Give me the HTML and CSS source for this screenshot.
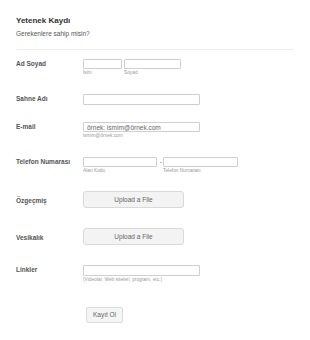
FILE: index.html
```html
<!DOCTYPE html>
<html lang="tr">
<head>
<meta charset="utf-8">
<link rel="stylesheet" href="styles.css">
</head>
<body>
<form class="form">
  <header class="head">
    <h1 class="title">Yetenek Kaydı</h1>
    <p class="subtitle">Gerekenlere sahip misin?</p>
  </header>

  <div class="row row-tall">
    <label class="label">Ad Soyad</label>
    <div class="field pair">
      <span class="sub"><input class="input w-first" type="text"><small class="hint">İsim</small></span>
      <span class="sub"><input class="input w-last" type="text"><small class="hint">Soyad</small></span>
    </div>
  </div>

  <div class="row row-single">
    <label class="label">Sahne Adı</label>
    <div class="field"><input class="input w-wide tall" type="text"></div>
  </div>

  <div class="row row-tall">
    <label class="label">E-mail</label>
    <div class="field">
      <input class="input w-wide" type="text" placeholder="örnek: ismim@örnek.com">
      <small class="hint">ismim@örnek.com</small>
    </div>
  </div>

  <div class="row row-phone">
    <label class="label">Telefon Numarası</label>
    <div class="field pair">
      <span class="sub"><input class="input w-area" type="text"><small class="hint">Alan Kodu</small></span>
      <span class="dash">-</span>
      <span class="sub"><input class="input w-phone" type="text"><small class="hint">Telefon Numarası</small></span>
    </div>
  </div>

  <div class="row row-upload">
    <label class="label lab-upload">Özgeçmiş</label>
    <div class="field"><button class="upload" type="button">Upload a File</button></div>
  </div>

  <div class="row row-upload">
    <label class="label lab-upload">Vesikalık</label>
    <div class="field"><button class="upload" type="button">Upload a File</button></div>
  </div>

  <div class="row row-links">
    <label class="label">Linkler</label>
    <div class="field">
      <input class="input w-wide tall" type="text">
      <small class="hint">(Videolar, Web siteleri, program, etc.)</small>
    </div>
  </div>

  <div class="submit-row">
    <button class="submit" type="submit">Kayıt Ol</button>
  </div>
</form>
</body>
</html>
```

FILE: styles.css
```css
* { box-sizing: border-box; }
html, body { margin: 0; padding: 0; background: #fff; }
body { font-family: "Liberation Sans", Arial, sans-serif; color: #555; }

.form { padding: 0 16px; width: 310px; }

.head { padding-top: 15px; padding-bottom: 11px; border-bottom: 1px solid #eeeeee; margin-bottom: 9px; }
.title { margin: 0; font-size: 8px; line-height: 11px; font-weight: bold; color: #333; }
.subtitle { margin: 3px 0 0; font-size: 6.5px; line-height: 9px; color: #555; }

.row { display: flex; align-items: flex-start; padding-bottom: 18px; }
.row-single { padding-bottom: 17px; }
.row-tall { padding-bottom: 18px; }
.row-phone { padding-bottom: 17px; }
.row-upload { padding-bottom: 20px; }
.row-links { padding-bottom: 20px; }

.label { flex: 0 0 67px; font-size: 6.5px; line-height: 10px; font-weight: bold; color: #555; }
.lab-upload { padding-top: 5px; }

.field { display: flex; flex-direction: column; }
.pair { flex-direction: row; align-items: flex-start; }
.sub { display: flex; flex-direction: column; margin-right: 2px; }

.input {
  display: block; height: 10px; border: 1px solid #cfcfcf; border-radius: 1px;
  background: #fff; padding: 0 3px; margin: 0;
  font-family: "Liberation Sans", Arial, sans-serif; font-size: 6.5px; color: #666;
}
.input::placeholder { color: #666; opacity: 1; }
.tall { height: 11px; }
.w-first { width: 39px; }
.w-last { width: 57px; }
.w-wide { width: 117px; }
.w-area { width: 74px; }
.w-phone { width: 75px; }

.dash { width: 4px; font-size: 7px; line-height: 10px; color: #777; text-align: center; }

.hint { display: block; margin-top: 1px; font-size: 4.8px; line-height: 6px; color: #9a9a9a; white-space: nowrap; }

.upload {
  width: 101px; height: 17px; margin: 0; padding: 0;
  background: #f3f3f3; border: 1px solid #d9d9d9; border-radius: 3px;
  font-family: "Liberation Sans", Arial, sans-serif; font-size: 6.5px; color: #666;
}

.submit-row { padding-left: 70px; }
.submit {
  width: 37px; height: 16px; margin: 0; padding: 0;
  background: #f5f5f5; border: 1px solid #dcdcdc; border-radius: 2px;
  font-family: "Liberation Sans", Arial, sans-serif; font-size: 6.5px; color: #666;
}
```
